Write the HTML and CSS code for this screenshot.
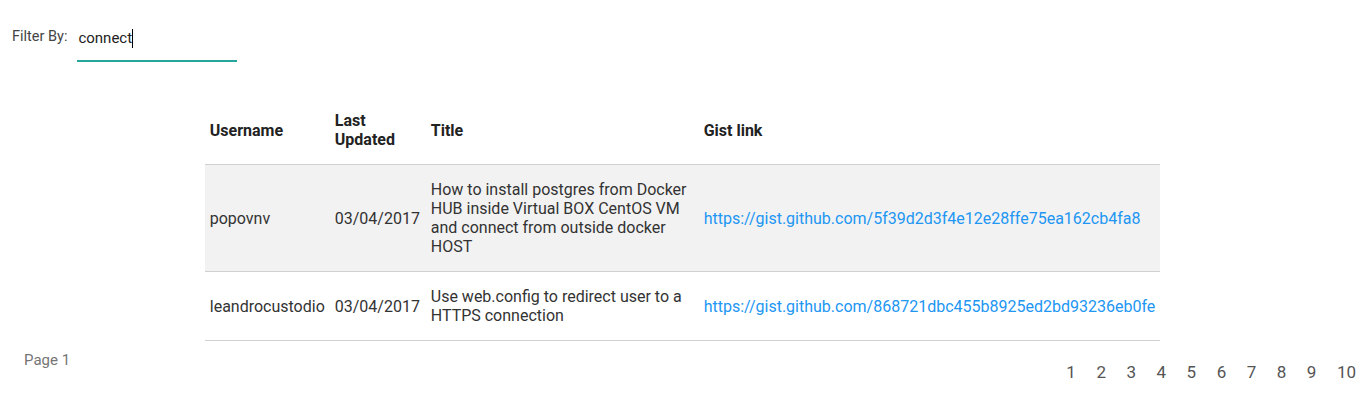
FILE: index.html
```html
<!DOCTYPE html>
<html>
<head>
<meta charset="utf-8">
<link rel="stylesheet" href="styles.css">
</head>
<body>
<div class="filter">
  <label class="filter-label">Filter By:</label>
  <div class="filter-input"><span class="val">connect</span><span class="caret"></span></div>
</div>
<table class="gists">
  <thead>
    <tr>
      <th class="c-user">Username</th>
      <th class="c-date">Last Updated</th>
      <th class="c-title">Title</th>
      <th class="c-link">Gist link</th>
    </tr>
  </thead>
  <tbody>
    <tr class="odd">
      <td>popovnv</td>
      <td>03/04/2017</td>
      <td>How to install postgres from Docker HUB inside Virtual BOX CentOS VM and connect from outside docker HOST</td>
      <td><a href="#">https://gist.github.com/5f39d2d3f4e12e28ffe75ea162cb4fa8</a></td>
    </tr>
    <tr>
      <td>leandrocustodio</td>
      <td>03/04/2017</td>
      <td>Use web.config to redirect user to a HTTPS connection</td>
      <td><a href="#">https://gist.github.com/868721dbc455b8925ed2bd93236eb0fe</a></td>
    </tr>
  </tbody>
</table>
<div class="footer">
  <div class="page-label">Page 1</div>
  <div class="pager">
    <a href="#">1</a><a href="#">2</a><a href="#">3</a><a href="#">4</a><a href="#">5</a><a href="#">6</a><a href="#">7</a><a href="#">8</a><a href="#">9</a><a href="#">10</a>
  </div>
</div>
</body>
</html>
```
FILE: styles.css
```css
html, body { margin: 0; padding: 0; background: #fff; }
body { font-family: Roboto, "Liberation Sans", sans-serif; color: #333; }

.filter { display: flex; align-items: flex-start; padding: 27px 0 0 12px; height: 69px; box-sizing: border-box; }
.filter-label { font-size: 14.5px; color: #444; line-height: 20px; margin-right: 10px; }
.filter-input { width: 160px; height: 33px; border-bottom: 2px solid #26a69a; font-size: 15px; color: #222; line-height: 22px; display: flex; align-items: flex-start; }
.filter-input .val { display: inline-block; padding-left: 1px; }
.caret { display: inline-block; width: 1px; height: 19px; background: #000; margin-top: 2px; }

.gists { width: 70%; margin: 27px auto 0; border-collapse: collapse; font-size: 16px; line-height: 19px; }
.gists th, .gists td { padding: 15px 5px; text-align: left; vertical-align: middle; }
.gists th { font-weight: 700; color: #222; }
.gists tr { border-bottom: 1px solid #d0d0d0; }
.gists tr.odd { background: #f2f2f2; }
.c-user { width: 115px; }
.c-date { width: 86px; }
.c-title { width: 263px; }
.gists a { color: #2196f3; text-decoration: none; }

.footer { display: flex; justify-content: space-between; align-items: flex-start; padding: 10px 9px 0 24px; }
.page-label { font-size: 15px; color: #757575; line-height: 18px; }
.pager { display: flex; margin-top: 11px; font-size: 17px; line-height: 20px; }
.pager a { color: #555; text-decoration: none; margin-left: 20.5px; }
.pager a:first-child { margin-left: 0; }
```
